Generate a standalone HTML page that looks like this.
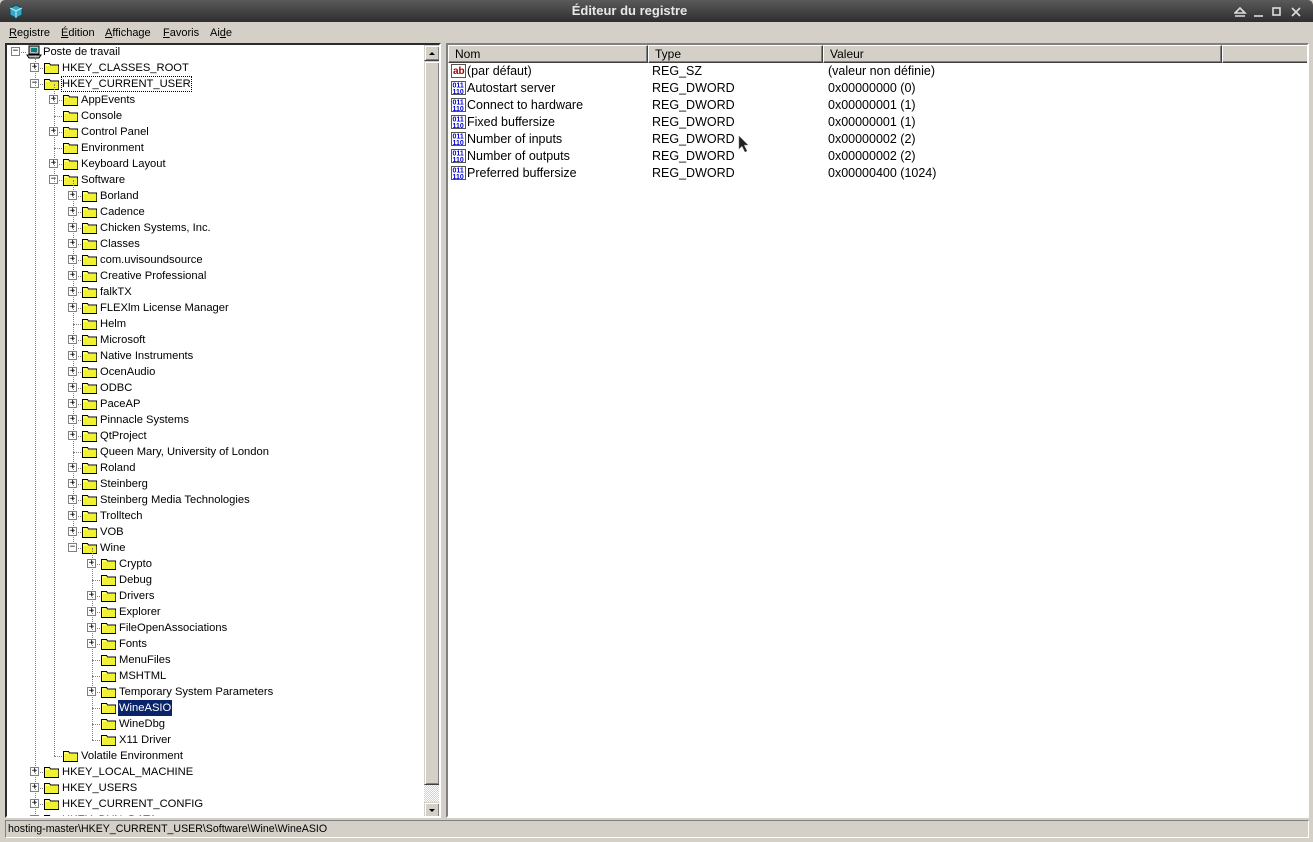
<!DOCTYPE html>
<html><head><meta charset="utf-8"><style>
*{margin:0;padding:0;box-sizing:border-box}
body{width:1313px;height:842px;overflow:hidden;background:#d4d0c8;font-family:"Liberation Sans",sans-serif;font-size:11px;color:#000;position:relative}
.abs{position:absolute}
#title{left:0;top:0;width:1313px;height:22px;background:linear-gradient(#5a5a5a,#2e2e2e);color:#e8e8e8;font-weight:bold;font-size:13px;text-align:center;line-height:22px;border-radius:5px 5px 0 0;padding-right:54px}
#menu{left:0;top:22px;width:1313px;height:21px;line-height:23px;font-size:11px}
#menu span{position:absolute}
#menu u{text-decoration:underline}
#tree{left:5px;top:43px;width:436px;height:775px;background:#fff;border:2px inset #888;border-color:#808080 #fff #fff #808080;overflow:hidden}
#list{left:446px;top:43px;width:863px;height:775px;background:#fff;border:2px solid;border-color:#808080 #fff #fff #808080;overflow:hidden}
.row{position:absolute;height:16px;line-height:16px;white-space:nowrap;font-size:11.2px}
.box{position:absolute;width:9px;height:9px;border:1px solid #808080;background:#fff;font-size:9px;line-height:7px;text-align:center;font-family:"DejaVu Sans Mono",monospace;color:#000}
.fold{position:absolute;width:16px;height:12px}
.vl{position:absolute;width:1px;border-left:1px dotted #808080}
.hl{position:absolute;height:1px;border-top:1px dotted #808080}
.sb{position:absolute;left:417px;width:16px;background:#d4d0c8;border:1px solid;border-color:#d4d0c8 #404040 #404040 #d4d0c8;box-shadow:inset 1px 1px #fff,inset -1px -1px #808080}
.hd{position:absolute;top:0;height:18px;background:#d4d0c8;border:1px solid;border-color:#fff #404040 #404040 #fff;box-shadow:inset -1px -1px #808080;line-height:17px;padding-left:6px;font-size:12px}
.lr{position:absolute;left:0;height:17px;line-height:17px;width:860px;font-size:12.5px}
#status{left:5px;top:820px;width:1304px;height:18px;border:1px solid;border-color:#808080 #fff #fff #808080;line-height:17px;padding-left:2px;font-size:10.6px}
</style></head><body>
<div id="title" class="abs">Éditeur du registre
<svg class="abs" style="left:8px;top:4px" width="16" height="15" viewBox="0 0 16 15"><path d="M2 4L8 1L14 4V11L8 14L2 11Z" fill="#3aa6c4" stroke="#0a4a5a"/><path d="M2 4L8 7L14 4M8 7V14" stroke="#bdeff8" fill="none"/></svg>
<svg class="abs" style="left:1234px;top:6px" width="75" height="12" viewBox="0 0 75 12"><g fill="none" stroke="#ddd" stroke-width="1.6"><path d="M1 7L6 2L11 7Z M1 10H11"/><path d="M20 10H29"/><rect x="39" y="2" width="7" height="7"/><path d="M58 2L66 10M66 2L58 10"/></g></svg>
</div>
<div id="menu" class="abs"><span style="left:9px"><u>R</u>egistre</span><span style="left:61px"><u>É</u>dition</span><span style="left:105px"><u>A</u>ffichage</span><span style="left:163px"><u>F</u>avoris</span><span style="left:210px">Ai<u>d</u>e</span></div>
<div id="tree" class="abs"></div>
<div id="list" class="abs">
<div class="hd" style="left:0;width:200px">Nom</div>
<div class="hd" style="left:200px;width:175px">Type</div>
<div class="hd" style="left:375px;width:399px">Valeur</div>
<div class="hd" style="left:774px;width:90px"></div>
<div id="rows"></div>
</div>
<div id="status" class="abs">hosting-master\HKEY_CURRENT_USER\Software\Wine\WineASIO</div>
<svg class="abs" style="left:738px;top:135px" width="12" height="18"><path d="M1 1V14L4 11L7 17L9 16L6 10H10Z" fill="#222" stroke="#777" stroke-width=".5"/></svg>
<script>
var T=[[0,'-','Poste de travail'],[1,'+','HKEY_CLASSES_ROOT'],[1,'-','HKEY_CURRENT_USER'],[2,'+','AppEvents'],[2,'','Console'],[2,'+','Control Panel'],[2,'','Environment'],[2,'+','Keyboard Layout'],[2,'-','Software']];
'+Borland|+Cadence|+Chicken Systems, Inc.|+Classes|+com.uvisoundsource|+Creative Professional|+falkTX|+FLEXlm License Manager| Helm|+Microsoft|+Native Instruments|+OcenAudio|+ODBC|+PaceAP|+Pinnacle Systems|+QtProject| Queen Mary, University of London|+Roland|+Steinberg|+Steinberg Media Technologies|+Trolltech|+VOB|-Wine'.split('|').forEach(function(s){T.push([3,s[0].trim(),s.slice(1)])});
'+Crypto| Debug|+Drivers|+Explorer|+FileOpenAssociations|+Fonts| MenuFiles| MSHTML|+Temporary System Parameters| WineASIO| WineDbg| X11 Driver'.split('|').forEach(function(s){T.push([4,s[0].trim(),s.slice(1)])});
T.push([2,'','Volatile Environment'],[1,'+','HKEY_LOCAL_MACHINE'],[1,'+','HKEY_USERS'],[1,'+','HKEY_CURRENT_CONFIG'],[1,'+','HKEY_DYN_DATA']);
var h='',par=[];
function folder(){return '<svg class="fold" viewBox="0 0 16 12"><path d="M0.5 1.5h5l1 1.5h8v8.5h-14z" fill="#ffff80" stroke="#000"/><path d="M1.5 4h13v7h-13z" fill="#e8e800" opacity=".6"/></svg>'}
T.forEach(function(r,i){
 var L=r[0],y=i*16-1,bx=4+19*L,my=y+8;
 par[L]=i;
 if(L>0){var py=par[L-1]*16+7;var vx=bx+5;
  h+='<div class="vl" style="left:'+vx+'px;top:'+py+'px;height:'+(my-py)+'px"></div>';
  h+='<div class="hl" style="left:'+vx+'px;top:'+my+'px;width:10px"></div>';}
 else h+='<div class="hl" style="left:9px;top:'+my+'px;width:10px"></div>';
 if(r[1])h+='<div class="box" style="left:'+bx+'px;top:'+(y+3)+'px">'+(r[1]=='+'?'+':'&minus;')+'</div>';
 var ic=L==0?'<svg class="fold" style="left:'+(bx+15)+'px;top:'+(y+1)+'px;width:16px;height:14px" viewBox="0 0 16 14"><rect x="3" y="1" width="10" height="8" fill="#c0c0c0" stroke="#000"/><rect x="5" y="3" width="6" height="4" fill="#008080"/><path d="M1 10h14l-2 3H3z" fill="#c0c0c0" stroke="#000"/></svg>':folder().replace('class="fold"','class="fold" style="left:'+(bx+14)+'px;top:'+(y+2)+'px"');
 h+=ic;
 var st='left:'+(bx+31)+'px;top:'+y+'px;padding:0 1px;';
 if(r[2]=='WineASIO')st+='background:#0a246a;color:#fff;';
 if(r[2]=='HKEY_CURRENT_USER')st+='outline:1px dotted #000;outline-offset:-1px;';
 h+='<div class="row" style="'+st+'">'+r[2]+'</div>';
});
h+='<div class="sb" style="top:0;height:16px"><svg width="14" height="14"><path d="M4 9L7 6L10 9Z" fill="#000"/></svg></div>';
h+='<div class="sb" style="top:16px;height:724px"></div>';
h+='<div class="abs" style="left:417px;top:740px;width:16px;height:17px;background:repeating-conic-gradient(#fff 0 25%,#d4d0c8 0 50%) 0 0/2px 2px"></div>';
h+='<div class="sb" style="top:757px;height:16px"><svg width="14" height="14"><path d="M4 6L7 9L10 6Z" fill="#000"/></svg></div>';
document.getElementById('tree').innerHTML=h;
var L=[['(par défaut)','REG_SZ','(valeur non définie)'],['Autostart server','REG_DWORD','0x00000000 (0)'],['Connect to hardware','REG_DWORD','0x00000001 (1)'],['Fixed buffersize','REG_DWORD','0x00000001 (1)'],['Number of inputs','REG_DWORD','0x00000002 (2)'],['Number of outputs','REG_DWORD','0x00000002 (2)'],['Preferred buffersize','REG_DWORD','0x00000400 (1024)']];
var g='';
L.forEach(function(r,i){var y=18+i*17;
 var ic=i==0?'<svg class="abs" style="left:3px;top:1px" width="16" height="15" viewBox="0 0 16 15"><rect x=".5" y=".5" width="14" height="13" fill="#fff" stroke="#555"/><text x="2" y="10" font-size="10" font-weight="bold" fill="#900" font-family="Liberation Sans">ab</text></svg>':'<svg class="abs" style="left:3px;top:1px" width="16" height="15" viewBox="0 0 16 15"><rect x=".5" y=".5" width="14" height="13" fill="#fff" stroke="#555"/><text x="1.5" y="6.5" font-size="7" font-weight="bold" fill="#00c" font-family="Liberation Sans">011</text><text x="1.5" y="13" font-size="7" font-weight="bold" fill="#00c" font-family="Liberation Sans">110</text></svg>';
 g+='<div class="lr" style="top:'+y+'px">'+ic+'<span class="abs" style="left:19px">'+r[0]+'</span><span class="abs" style="left:204px">'+r[1]+'</span><span class="abs" style="left:380px">'+r[2]+'</span></div>';});
document.getElementById('rows').innerHTML=g;
</script>
</body></html>
